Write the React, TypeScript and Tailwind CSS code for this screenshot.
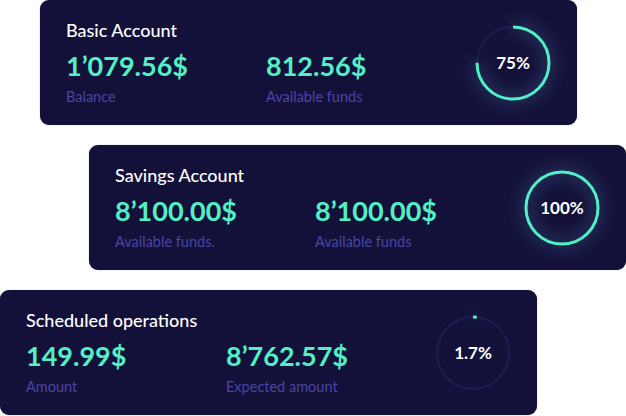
import type { CSSProperties } from "react";

interface Stat {
  value: string;
  label: string;
}

interface Account {
  title: string;
  stats: Stat[];
  percent: number;
  offset: string;
}

const accounts: Account[] = [
  {
    title: "Basic Account",
    stats: [
      { value: "1’079.56$", label: "Balance" },
      { value: "812.56$", label: "Available funds" },
    ],
    percent: 75,
    offset: "ml-[40px]",
  },
  {
    title: "Savings Account",
    stats: [
      { value: "8’100.00$", label: "Available funds." },
      { value: "8’100.00$", label: "Available funds" },
    ],
    percent: 100,
    offset: "ml-[89px]",
  },
  {
    title: "Scheduled operations",
    stats: [
      { value: "149.99$", label: "Amount" },
      { value: "8’762.57$", label: "Expected amount" },
    ],
    percent: 1.7,
    offset: "ml-0",
  },
];

const font: CSSProperties = { fontFamily: "Lato, 'Noto Sans', sans-serif" };

function Ring({ percent }: { percent: number }) {
  const r = 36;
  const c = 2 * Math.PI * r;
  const dash = (percent / 100) * c;

  return (
    <div className="relative flex h-[80px] w-[80px] items-center justify-center">
      <svg width="80" height="80" viewBox="0 0 80 80" className="absolute inset-0 overflow-visible">
        <defs>
          <filter id={`glow-${percent}`} x="-60%" y="-60%" width="220%" height="220%">
            <feGaussianBlur stdDeviation="8" />
          </filter>
        </defs>
        <circle cx="40" cy="40" r={r} fill="none" stroke="#1e1c50" strokeWidth="2" />
        <circle
          cx="40"
          cy="40"
          r={r}
          fill="none"
          stroke="#3b5c8a"
          strokeOpacity="0.5"
          strokeWidth="10"
          strokeDasharray={`${dash} ${c}`}
          transform="rotate(-90 40 40)"
          filter={`url(#glow-${percent})`}
        />
        <circle
          cx="40"
          cy="40"
          r={r}
          fill="none"
          stroke="#4ff0c3"
          strokeWidth="3"
          strokeDasharray={`${dash} ${c}`}
          transform="rotate(-90 40 40)"
        />
      </svg>
      <span className="relative text-[17px] font-bold text-white">{percent}%</span>
    </div>
  );
}

function AccountCard({ account }: { account: Account }) {
  return (
    <div
      className={`${account.offset} flex h-[125px] w-[537px] items-center justify-between rounded-[9px] bg-[#13113a] pl-[26px] pr-[24px] shadow-[0_0_1px_rgba(0,0,0,0.5)]`}
    >
      <div className="flex flex-col">
        <h3 className="text-[18px] font-medium leading-none text-white">{account.title}</h3>
        <div className="mt-[13px] flex">
          {account.stats.map((s, i) => (
            <div key={i} className="flex w-[200px] flex-col">
              <span className="text-[27px] font-bold leading-none text-[#52f0c4]">{s.value}</span>
              <span className="mt-[11px] text-[14.5px] leading-none text-[#4b45a4]">{s.label}</span>
            </div>
          ))}
        </div>
      </div>
      <Ring percent={account.percent} />
    </div>
  );
}

export default function App() {
  return (
    <div className="flex h-[416px] w-[626px] flex-col gap-[20px] bg-white" style={font}>
      {accounts.map((a) => (
        <AccountCard key={a.title} account={a} />
      ))}
    </div>
  );
}
